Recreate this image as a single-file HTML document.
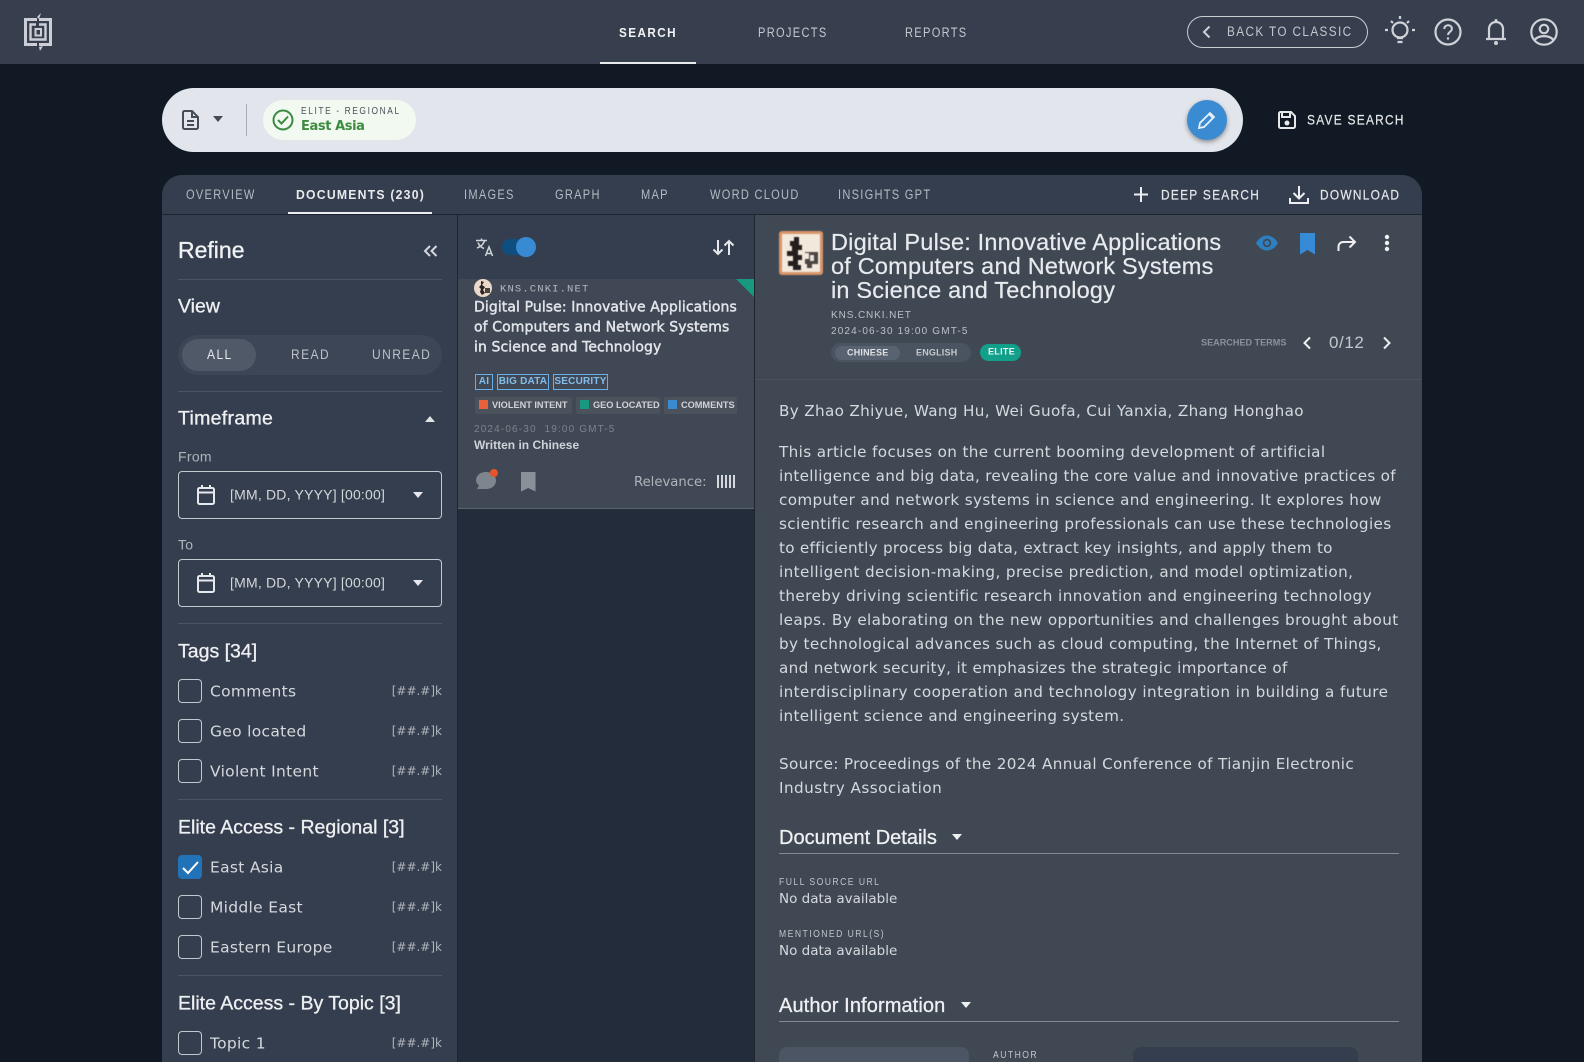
<!DOCTYPE html>
<html lang="en"><head><meta charset="utf-8"><title>Documents</title>
<style>
html,body{margin:0;padding:0;background:#111a24;width:1584px;height:1062px;overflow:hidden}
#r{position:relative;width:1584px;height:1062px;overflow:hidden;font-family:"Liberation Sans",sans-serif}
.b{position:absolute}
.t{position:absolute;white-space:nowrap;transform:translateY(-50%);line-height:1.2}
.n{font-family:"DejaVu Sans",sans-serif}
svg{position:absolute;overflow:visible}
.nav{font-size:13.5px;letter-spacing:1.6px;color:#c3c8ce;margin-top:1px;transform:translateY(-50%) scaleX(.82);transform-origin:0 50%}
.tab{font-size:13.5px;letter-spacing:1.55px;color:#b4bac3;margin-top:1px;transform:translateY(-50%) scaleX(.82);transform-origin:0 50%}
.act{font-size:14px;letter-spacing:1.5px;color:#e6e8eb;-webkit-text-stroke:.2px #e6e8eb;transform:translateY(-50%) scaleX(.85);transform-origin:0 50%}
.h{font-size:19.5px;color:#eef0f2;font-weight:400;margin-top:2px;-webkit-text-stroke:.3px #eef0f2}
.ln{position:absolute;left:178px;width:264px;height:1px;background:#4a5362}
.cb{position:absolute;left:178px;width:22px;height:22px;border:1px solid #c3c8ce;border-radius:4px}
.lb{font-size:15.5px;color:#d5d9dd;left:210px;letter-spacing:.3px;margin-top:1px}
.ct{font-family:"DejaVu Sans",sans-serif;font-size:12px;color:#aeb3ba;right:1142px}
.p{left:779px;font-size:15.2px;color:#d5d9de}
.tag{position:absolute;top:374px;height:14px;border:1px solid #69aee6;color:#82bdec;font-size:10px;font-weight:700;text-align:center;line-height:14px;letter-spacing:.2px}
.chip{position:absolute;top:397px;height:17px;background:#4c525c;border-radius:2px;color:#d0d3d7;font-size:9.2px;font-weight:700;line-height:17px;white-space:nowrap}
.chip i{display:inline-block;width:9px;height:9px;margin:0 4px 0 4px;vertical-align:-1px}
.lab{left:779px;font-size:10px;letter-spacing:1.7px;color:#c0c4c9;margin-top:1px;transform:translateY(-50%) scaleX(.86);transform-origin:0 50%}
.val{left:779px;font-size:13.5px;color:#d5d9de}
.ti{left:474px;font-size:14px;color:#e1e4e8;letter-spacing:.09px;-webkit-text-stroke:.45px #e1e4e8;margin-top:1px}
.dt{left:831px;font-size:23.5px;color:#e8ebee;letter-spacing:.2px;-webkit-text-stroke:.2px #e8ebee}
</style></head><body><div id="r">

<div class="b" style="left:0;top:0;width:1584px;height:64px;background:#373f4f"></div>
<svg style="left:24px;top:13px" width="28" height="38" viewBox="0 0 28 38" fill="none" stroke="#ccd0d6">
<path d="M13 6.500H1.500V31.500H13M15 6.500H26.500V31.500H15" stroke-width="3"/>
<path d="M13 4L17 0L15 6ZM15 34L19 33L16 38Z" fill="#ccd0d6" stroke="none"/>
<path d="M12 11.500H6.500V26.500H21.500V11.500H15" stroke-width="2.400"/>
<rect x="11.500" y="16" width="5.500" height="6.500" stroke-width="2"/>
</svg>
<div class="t nav" style="left:619px;top:32px;color:#f2f3f5;font-weight:700;font-size:13px;transform:translateY(-50%) scaleX(.9)">SEARCH</div>
<div class="b" style="left:600px;top:62px;width:96px;height:2px;background:#e8eaec"></div>
<div class="t nav" style="left:758px;top:32px">PROJECTS</div>
<div class="t nav" style="left:905px;top:32px">REPORTS</div>

<div class="b" style="left:1187px;top:16px;width:179px;height:30px;border:1px solid #c9cdd3;border-radius:16px"></div>
<svg style="left:1201px;top:25px" width="12" height="14" fill="none" stroke="#ccd0d6" stroke-width="2"><path d="M8.500 1.500L3 7l5.500 5.500"/></svg>
<div class="t nav" style="left:1227px;top:31px;transform:translateY(-50%) scaleX(.87)">BACK TO CLASSIC</div>
<svg style="left:1384px;top:15px" width="32" height="32" viewBox="0 0 32 32" fill="none" stroke="#cfd2d7" stroke-width="2.200"><circle cx="16" cy="15" r="7.500"/><path d="M13 23h6M13.500 27h5M16 1v3M4 15H1M31 15h-3M7 6l2 2M25 6l-2 2"/></svg>
<svg style="left:1434px;top:18px" width="28" height="28" fill="none" stroke="#cfd2d7" stroke-width="2.200"><circle cx="14" cy="14" r="12.500"/><path d="M10.300 11c0-5 7.600-5 7.600-.2 0 3-3.900 3-3.900 6.200" stroke-width="2"/><circle cx="14" cy="20.500" r="1.200" fill="#cfd2d7" stroke="none"/></svg>
<svg style="left:1485px;top:18px" width="22" height="28" fill="none" stroke="#cfd2d7" stroke-width="2.200"><path d="M4 20V11c0-4 3-7 7-7s7 3 7 7v9M1 21h20" /><circle cx="11" cy="2.500" r="1.500" fill="#cfd2d7" stroke="none"/><circle cx="11" cy="25" r="2" fill="#cfd2d7" stroke="none"/></svg>
<svg style="left:1530px;top:18px" width="28" height="28" fill="none" stroke="#cfd2d7" stroke-width="2.200"><circle cx="14" cy="14" r="12.700"/><circle cx="14" cy="11" r="4.200"/><path d="M4.500 22c4-5.200 15-5.200 19 0"/></svg>

<div class="b" style="left:162px;top:88px;width:1081px;height:64px;border-radius:32px;background:#e2e6ec"></div>
<svg style="left:182px;top:110px" width="17" height="20" fill="none" stroke="#454c56" stroke-width="2"><path d="M2.500 1H10l6 6v10.500a1.500 1.500 0 0 1-1.500 1.500h-12A1.500 1.500 0 0 1 1 17.500V2.500A1.500 1.500 0 0 1 2.500 1zM10 1v6h6M5 11h7M5 15h7"/></svg>
<svg style="left:212px;top:116px" width="12" height="7"><path d="M1 0h10L6 6z" fill="#454c56"/></svg>
<div class="b" style="left:246px;top:104px;width:1px;height:32px;background:#a9afb8"></div>
<div class="b" style="left:263px;top:100px;width:153px;height:40px;border-radius:20px;background:#f1f9f1"></div>
<svg style="left:272px;top:109px" width="22" height="22" fill="none" stroke="#3a8a40" stroke-width="2"><circle cx="11" cy="11" r="9.500"/><path d="M6 11l3.500 3.500L16 7.500"/></svg>
<div class="t" style="left:301px;top:112px;font-size:10px;letter-spacing:1.900px;color:#4b5159;transform:translateY(-50%) scaleX(.84);transform-origin:0 50%">ELITE - REGIONAL</div>
<div class="t n" style="left:301px;top:127px;font-size:13px;font-weight:700;letter-spacing:-.4px;color:#3d8b40">East Asia</div>
<div class="b" style="left:1187px;top:100px;width:40px;height:40px;border-radius:50%;background:#3a8bd2;box-shadow:0 2px 5px rgba(0,0,0,.4)"></div>
<svg style="left:1197px;top:110px" width="20" height="20" fill="none" stroke="#e8f1f9" stroke-width="1.800"><path d="M2 18l1-5L13 3l4 4L7 17zM12 4l4 4"/></svg>
<svg style="left:1278px;top:111px" width="18" height="18" fill="none" stroke="#e6e8eb" stroke-width="2"><path d="M1 2.500A1.500 1.500 0 0 1 2.500 1H13l4 4v10.500a1.500 1.500 0 0 1-1.500 1.500h-13A1.500 1.500 0 0 1 1 15.500zM4 2v4h8V2"/><circle cx="9" cy="12" r="2.500" fill="#e6e8eb" stroke="none"/></svg>
<div class="t act" style="left:1307px;top:120px">SAVE SEARCH</div>

<div class="b" style="left:162px;top:175px;width:1260px;height:887px;border-radius:20px 20px 0 0;background:#353e4e"></div>
<div class="b" style="left:162px;top:214px;width:1260px;height:1px;background:#1d2530"></div>
<div class="t tab" style="left:186px;top:194px">OVERVIEW</div>
<div class="t tab" style="left:296px;top:194px;color:#e8eaec;font-weight:700;font-size:13px;letter-spacing:1.300px;transform:translateY(-50%) scaleX(.94)">DOCUMENTS (230)</div>
<div class="b" style="left:288px;top:212px;width:144px;height:2px;background:#eceef0"></div>
<div class="t tab" style="left:464px;top:194px">IMAGES</div>
<div class="t tab" style="left:555px;top:194px">GRAPH</div>
<div class="t tab" style="left:641px;top:194px">MAP</div>
<div class="t tab" style="left:710px;top:194px">WORD CLOUD</div>
<div class="t tab" style="left:838px;top:194px">INSIGHTS GPT</div>
<svg style="left:1133px;top:187px" width="16" height="15" stroke="#eceef0" stroke-width="2"><path d="M8 0v15M1 7.500h14"/></svg>
<div class="t act" style="left:1161px;top:195px">DEEP SEARCH</div>
<svg style="left:1289px;top:185px" width="20" height="19" fill="none" stroke="#eceef0" stroke-width="2"><path d="M10 1v12M4.500 8l5.500 5.500L15.500 8M1 13v5h18v-5"/></svg>
<div class="t act" style="left:1320px;top:195px">DOWNLOAD</div>

<!-- refine -->
<div class="b" style="left:457px;top:215px;width:298px;height:847px;background:#222c3b;border-left:1px solid #1d2530;border-right:1px solid #1d2530;box-sizing:border-box"></div>
<div class="t" style="left:178px;top:251px;font-size:23px;color:#f0f2f4;-webkit-text-stroke:.35px #f0f2f4">Refine</div>
<svg style="left:423px;top:245px" width="15" height="12" fill="none" stroke="#d5d8dc" stroke-width="2"><path d="M7 1L2 6l5 5M13.500 1l-5 5 5 5"/></svg>
<div class="ln" style="top:279px"></div>
<div class="t h" style="left:178px;top:305px">View</div>
<div class="b" style="left:178px;top:335px;width:264px;height:40px;border-radius:20px;background:#3d4656"></div>
<div class="b" style="left:182px;top:339px;width:74px;height:32px;border-radius:16px;background:#4f5968"></div>
<div class="t nav" style="left:207px;top:354px;color:#e6e8eb;transform:translateY(-50%) scaleX(.89)">ALL</div>
<div class="t nav" style="left:291px;top:354px;color:#bcc1c7;transform:translateY(-50%) scaleX(.89)">READ</div>
<div class="t nav" style="left:372px;top:354px;color:#bcc1c7;transform:translateY(-50%) scaleX(.89)">UNREAD</div>
<div class="ln" style="top:391px"></div>
<div class="t h" style="left:178px;top:417px;letter-spacing:.3px">Timeframe</div>
<svg style="left:425px;top:416px" width="10" height="6"><path d="M0 6h10L5 0z" fill="#e0e3e6"/></svg>
<div class="t" style="left:178px;top:457px;font-size:14px;color:#aeb3ba;letter-spacing:.3px">From</div>
<div class="b" style="left:178px;top:471px;width:262px;height:46px;border:1px solid #c5cad0;border-radius:4px"></div>
<svg style="left:197px;top:485px" width="18" height="20" fill="none" stroke="#e6e8eb" stroke-width="2"><rect x="1" y="3" width="16" height="16" rx="1.500"/><path d="M1 7.500h16M5 0v4M13 0v4"/></svg>
<div class="t" style="left:230px;top:495px;font-size:14px;letter-spacing:.2px;color:#d3d7db">[MM, DD, YYYY] [00:00]</div>
<svg style="left:413px;top:492px" width="10" height="6"><path d="M0 0h10L5 6z" fill="#e6e8eb"/></svg>
<div class="t" style="left:178px;top:545px;font-size:14px;color:#aeb3ba;letter-spacing:.3px">To</div>
<div class="b" style="left:178px;top:559px;width:262px;height:46px;border:1px solid #c5cad0;border-radius:4px"></div>
<svg style="left:197px;top:573px" width="18" height="20" fill="none" stroke="#e6e8eb" stroke-width="2"><rect x="1" y="3" width="16" height="16" rx="1.500"/><path d="M1 7.500h16M5 0v4M13 0v4"/></svg>
<div class="t" style="left:230px;top:583px;font-size:14px;letter-spacing:.2px;color:#d3d7db">[MM, DD, YYYY] [00:00]</div>
<svg style="left:413px;top:580px" width="10" height="6"><path d="M0 0h10L5 6z" fill="#e6e8eb"/></svg>
<div class="ln" style="top:623px"></div>
<div class="t h" style="left:178px;top:650px">Tags [34]</div>

<div class="cb" style="top:679px"></div><div class="t lb n" style="top:691px">Comments</div><div class="t ct" style="top:691px">[##.#]k</div>
<div class="cb" style="top:719px"></div><div class="t lb n" style="top:731px">Geo located</div><div class="t ct" style="top:731px">[##.#]k</div>
<div class="cb" style="top:759px"></div><div class="t lb n" style="top:771px">Violent Intent</div><div class="t ct" style="top:771px">[##.#]k</div>
<div class="ln" style="top:799px"></div>
<div class="t h" style="left:178px;top:826px">Elite Access - Regional [3]</div>
<div class="cb" style="top:855px;background:#2272b8;border-color:#2272b8"></div>
<svg style="left:182px;top:860px" width="17" height="15" fill="none" stroke="#fff" stroke-width="2"><path d="M1 8l5 5L16 2"/></svg>
<div class="t lb n" style="top:867px">East Asia</div><div class="t ct" style="top:867px">[##.#]k</div>
<div class="cb" style="top:895px"></div><div class="t lb n" style="top:907px">Middle East</div><div class="t ct" style="top:907px">[##.#]k</div>
<div class="cb" style="top:935px"></div><div class="t lb n" style="top:947px">Eastern Europe</div><div class="t ct" style="top:947px">[##.#]k</div>
<div class="ln" style="top:975px"></div>
<div class="t h" style="left:178px;top:1002px">Elite Access - By Topic [3]</div>
<div class="cb" style="top:1031px"></div><div class="t lb n" style="top:1043px">Topic 1</div><div class="t ct" style="top:1043px">[##.#]k</div>

<!-- list -->
<div class="b" style="left:458px;top:215px;width:296px;height:64px;background:#353e4e"></div>
<svg style="left:475px;top:238px" width="20" height="19" fill="none" stroke="#d0d4d9" stroke-width="1.500"><path d="M1 2.500h11M6.500 .5v2M2 10c3-1 6-3 7.500-7M3 4.500c1 3 3.500 5 6 6M10.500 18l3.500-9 3.500 9M11.500 15.500h5"/></svg>
<div class="b" style="left:502px;top:239px;width:30px;height:16px;border-radius:8px;background:#0f4e80"></div>
<div class="b" style="left:516px;top:237px;width:20px;height:20px;border-radius:50%;background:#388ad2"></div>
<svg style="left:712px;top:239px" width="23" height="17" fill="none" stroke="#e6e8eb" stroke-width="2"><path d="M6 1v14M1.500 10.500L6 15l4.500-4.500M17 16V2M12.500 6.500L17 2l4.500 4.500"/></svg>

<div class="b" style="left:458px;top:279px;width:296px;height:230px;background:#3f4854;border-bottom:1px solid #59626d;box-sizing:border-box"></div>
<svg style="left:736px;top:279px" width="18" height="18"><path d="M0 0h18v18z" fill="#16997f"/></svg>
<svg style="left:474px;top:279px" width="18" height="18"><circle cx="9" cy="9" r="9" fill="#ead9c8"/><path d="M7 2l3 1-2 3 3 2-2 3 2 3-3 2-2-3 1-3-2-2 2-2z" fill="#2a2524"/><rect x="11" y="9" width="5" height="5" fill="#4a4441"/></svg>
<div class="t" style="left:500px;top:290px;font-family:'Liberation Mono',monospace;font-size:10.500px;letter-spacing:1.150px;color:#b5b9c0">KNS.CNKI.NET</div>
<div class="t n ti" style="top:307px">Digital Pulse: Innovative Applications</div>
<div class="t n ti" style="top:327px">of Computers and Network Systems</div>
<div class="t n ti" style="top:347px">in Science and Technology</div>
<div class="tag" style="left:475px;width:16px">AI</div>
<div class="tag" style="left:497px;width:50px">BIG DATA</div>
<div class="tag" style="left:553px;width:53px">SECURITY</div>
<div class="chip" style="left:475px;width:97px"><i style="background:#e8603c"></i>VIOLENT INTENT</div>
<div class="chip" style="left:576px;width:84px"><i style="background:#16997f"></i>GEO LOCATED</div>
<div class="chip" style="left:664px;width:73px"><i style="background:#3a8bd2"></i>COMMENTS</div>
<div class="t" style="left:474px;top:430px;font-size:10px;letter-spacing:1.150px;color:#7c838c">2024-06-30&nbsp; 19:00 GMT-5</div>
<div class="t" style="left:474px;top:445px;font-size:12px;font-weight:700;color:#cfd3d8">Written in Chinese</div>
<svg style="left:475px;top:469px" width="24" height="24"><path d="M11 3c6 0 10 3.500 10 8.500S17 20 11 20H2l2-3.500C2 15 1 13.500 1 11.500 1 6.500 5 3 11 3z" fill="#7f858d"/><circle cx="19" cy="4" r="4" fill="#e8532b"/></svg>
<svg style="left:521px;top:472px" width="15" height="20"><path d="M0 0h14.500v19.500L7.200 16 0 19.500z" fill="#8a9098"/></svg>
<div class="t n" style="left:634px;top:483px;font-size:13.200px;color:#b0b4ba">Relevance:</div>
<svg style="left:717px;top:475px" width="19" height="13" fill="#d5d8dc"><rect x="0" width="2" height="13"/><rect x="4" width="2" height="13"/><rect x="8" width="2" height="13"/><rect x="12" width="2" height="13"/><rect x="16" width="2" height="13"/></svg>

<!-- detail -->
<div class="b" style="left:755px;top:215px;width:667px;height:847px;background:#404953"></div>
<div class="b" style="left:755px;top:379px;width:667px;height:1px;background:#4a525d"></div>
<svg style="left:779px;top:231px;filter:blur(.6px)" width="44" height="44" viewBox="0 0 44 44"><rect width="44" height="44" rx="3" fill="#d9956a"/><rect x="3" y="3" width="38" height="38" fill="#f3e8dc"/><path d="M15 6h5v8h3v5h-4v5h4v5h-4v5h3v5h-8v-4h-5v-5h5v-5h-6v-5h5v-5h-2v-5h4z" fill="#241f1e"/><path d="M26 21h13v12h-6v4h-5v-4h-2v-5h4v-6h-4z" fill="#4a4543"/><rect x="31" y="24" width="4" height="6" fill="#e8e3dd"/></svg>
<div class="t dt" style="top:242px">Digital Pulse: Innovative Applications</div>
<div class="t dt" style="top:266px">of Computers and Network Systems</div>
<div class="t dt" style="top:290px">in Science and Technology</div>
<div class="t" style="left:831px;top:316px;font-size:10px;letter-spacing:.9px;color:#bcc0c6">KNS.CNKI.NET</div>
<div class="t" style="left:831px;top:332px;font-size:10px;letter-spacing:1.150px;color:#bcc0c6">2024-06-30 19:00 GMT-5</div>
<div class="b" style="left:831px;top:343px;width:140px;height:19px;border-radius:10px;background:#4a5360"></div>
<div class="b" style="left:835px;top:346px;width:65px;height:14px;border-radius:7px;background:#596270"></div>
<div class="t" style="left:847px;top:353px;font-size:9px;font-weight:700;letter-spacing:.2px;color:#dfe2e5">CHINESE</div>
<div class="t" style="left:916px;top:353px;font-size:9px;font-weight:700;letter-spacing:.2px;color:#c5c9ce">ENGLISH</div>
<div class="b" style="left:980px;top:344px;width:41px;height:17px;border-radius:9px;background:#12a08a"></div>
<div class="t" style="left:988px;top:352px;font-size:9px;font-weight:700;letter-spacing:.3px;color:#e8f5f2">ELITE</div>
<div class="t" style="left:1201px;top:343px;font-size:9.100px;font-weight:700;color:#8b9199">SEARCHED TERMS</div>
<svg style="left:1302px;top:336px" width="10" height="14" fill="none" stroke="#eceef0" stroke-width="2"><path d="M8 1.500L2.500 7 8 12.500"/></svg>
<div class="t" style="left:1329px;top:343px;font-size:17px;letter-spacing:.6px;color:#c3c7cc">0/12</div>
<svg style="left:1382px;top:336px" width="10" height="14" fill="none" stroke="#eceef0" stroke-width="2"><path d="M2 1.500L7.500 7 2 12.500"/></svg>
<svg style="left:1256px;top:235px" width="22" height="16"><path d="M0 8C3 3 7 .5 11 .5S19 3 22 8c-3 5-7 7.500-11 7.500S3 13 0 8z" fill="#2e7fc1"/><circle cx="11" cy="8" r="4.200" fill="#404953"/><circle cx="11" cy="8" r="2.500" fill="#2e7fc1"/></svg>
<svg style="left:1300px;top:233px" width="15" height="22"><path d="M0 0h15v21.500L7.500 17 0 21.500z" fill="#378ad4"/></svg>
<svg style="left:1337px;top:235px" width="20" height="17" fill="none" stroke="#eef0f2" stroke-width="2"><path d="M1.500 16V12c0-3 2-5 5-5h11M12.500 1.500L18 7l-5.500 5.500"/></svg>
<svg style="left:1384px;top:234px" width="6" height="18" fill="#eef0f2"><circle cx="3" cy="3" r="2.200"/><circle cx="3" cy="9" r="2.200"/><circle cx="3" cy="15" r="2.200"/></svg>

<div class="t n p" style="top:411px;letter-spacing:.335px">By Zhao Zhiyue, Wang Hu, Wei Guofa, Cui Yanxia, Zhang Honghao</div>
<div class="t n p" style="top:452px;letter-spacing:.365px">This article focuses on the current booming development of artificial</div>
<div class="t n p" style="top:476px;letter-spacing:.285px">intelligence and big data, revealing the core value and innovative practices of</div>
<div class="t n p" style="top:500px;letter-spacing:.37px">computer and network systems in science and engineering. It explores how</div>
<div class="t n p" style="top:524px;letter-spacing:.37px">scientific research and engineering professionals can use these technologies</div>
<div class="t n p" style="top:548px;letter-spacing:.275px">to efficiently process big data, extract key insights, and apply them to</div>
<div class="t n p" style="top:572px;letter-spacing:.4px">intelligent decision-making, precise prediction, and model optimization,</div>
<div class="t n p" style="top:596px;letter-spacing:.42px">thereby driving scientific research innovation and engineering technology</div>
<div class="t n p" style="top:620px;letter-spacing:.4px">leaps. By elaborating on the new opportunities and challenges brought about</div>
<div class="t n p" style="top:644px;letter-spacing:.365px">by technological advances such as cloud computing, the Internet of Things,</div>
<div class="t n p" style="top:668px;letter-spacing:.33px">and network security, it emphasizes the strategic importance of</div>
<div class="t n p" style="top:692px;letter-spacing:.42px">interdisciplinary cooperation and technology integration in building a future</div>
<div class="t n p" style="top:716px;letter-spacing:.31px">intelligent science and engineering system.</div>
<div class="t n p" style="top:764px;letter-spacing:.35px">Source: Proceedings of the 2024 Annual Conference of Tianjin Electronic</div>
<div class="t n p" style="top:788px;letter-spacing:.47px">Industry Association</div>

<div class="t h" style="left:779px;top:836px;font-size:20px">Document Details</div>
<svg style="left:952px;top:834px" width="10" height="6"><path d="M0 0h10L5 6z" fill="#eef0f2"/></svg>
<div class="b" style="left:779px;top:853px;width:620px;height:1px;background:#858b93"></div>
<div class="t lab" style="top:882px">FULL SOURCE URL</div>
<div class="t val n" style="top:899px">No data available</div>
<div class="t lab" style="top:934px">MENTIONED URL(S)</div>
<div class="t val n" style="top:951px">No data available</div>
<div class="t h" style="left:779px;top:1004px;font-size:20px;letter-spacing:.1px">Author Information</div>
<svg style="left:961px;top:1002px" width="10" height="6"><path d="M0 0h10L5 6z" fill="#eef0f2"/></svg>
<div class="b" style="left:779px;top:1021px;width:620px;height:1px;background:#858b93"></div>
<div class="b" style="left:779px;top:1047px;width:190px;height:40px;border-radius:8px;background:#4c5564"></div>
<div class="t lab" style="left:993px;top:1055px">AUTHOR</div>
<div class="b" style="left:1133px;top:1047px;width:225px;height:40px;border-radius:8px;background:#353e4e"></div>
</div></body></html>
